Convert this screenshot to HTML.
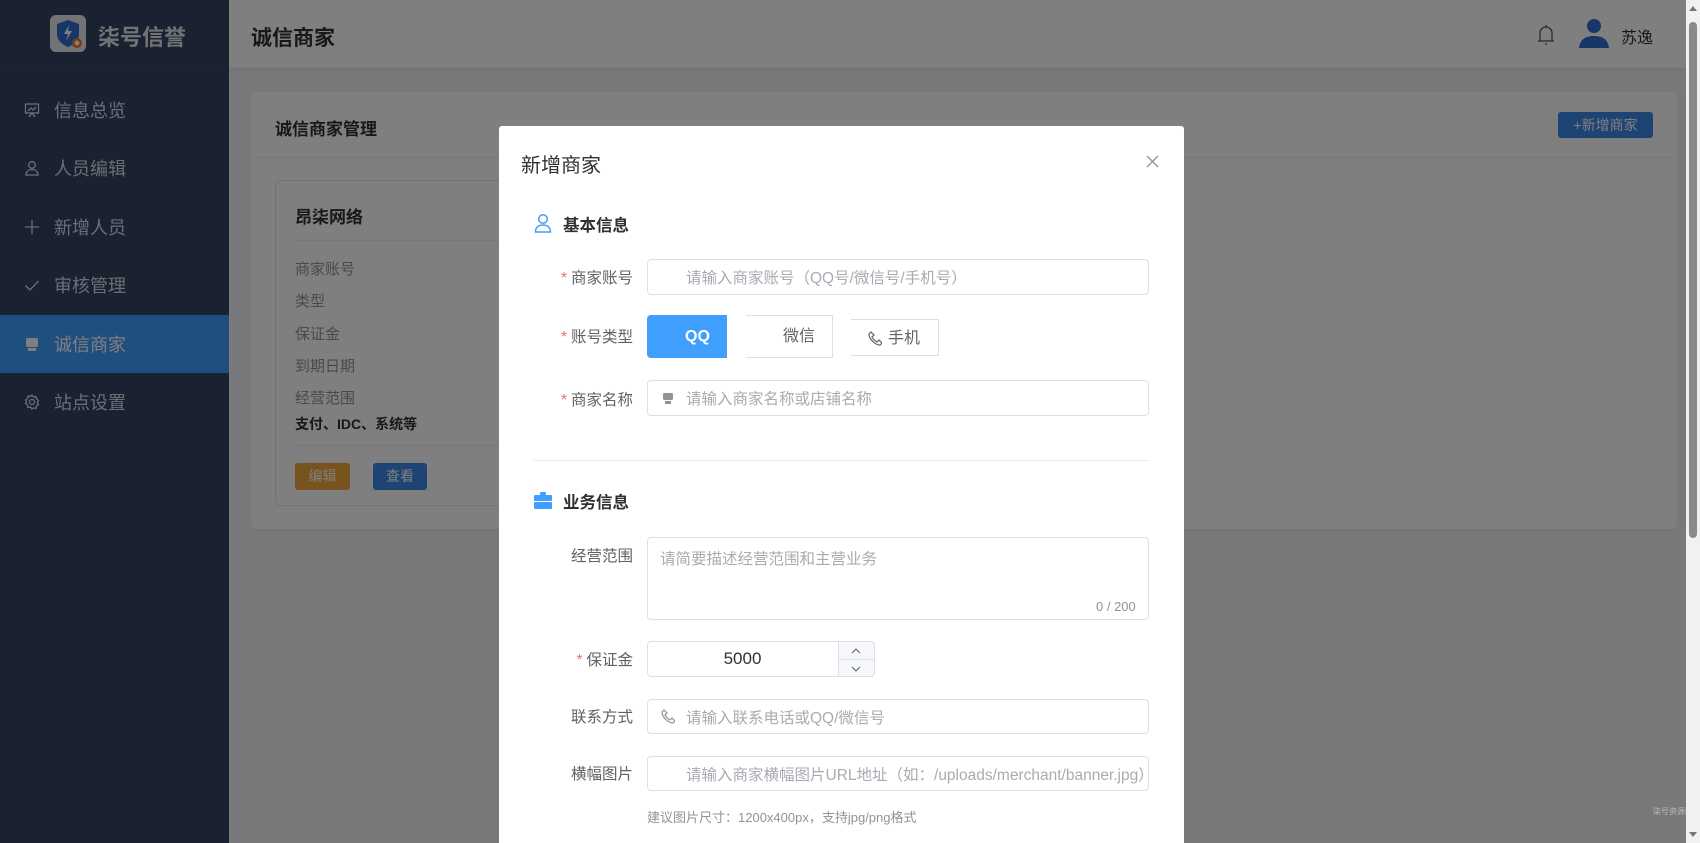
<!DOCTYPE html>
<html style="overflow:hidden;width:1700px;height:843px"><head><meta charset="utf-8"><style>
*{margin:0;padding:0;box-sizing:border-box}
body{width:1700px;height:843px;overflow:hidden;position:relative;font-family:"Liberation Sans","Noto Sans CJK SC",sans-serif;background:#f0f2f5;color:#303133}
.abs{position:absolute}
.side{left:0;top:0;width:229px;height:843px;background:#344260}
.menu{left:0;width:229px;height:58px;display:flex;align-items:center;padding-left:24px;color:#d8dde6;font-size:18px}
.menu svg{margin-right:14px}
.hdr{left:229px;top:0;width:1457px;height:68px;background:#fff;box-shadow:0 1px 4px rgba(0,0,0,.08)}
.card{background:#fff;border-radius:6px}
.lbl{font-size:15px;color:#909399}
.ov{left:0;top:0;width:1686px;height:843px;background:rgba(0,0,0,.5)}
.modal{left:499px;top:126px;width:685px;height:717px;background:#fff;border-radius:3px 3px 0 0}
.fl{position:absolute;font-size:15.5px;color:#606266;text-align:right;width:140px}
.fl b{color:#f56c6c;font-weight:normal;margin-right:4px}
.inp{position:absolute;border:1px solid #dcdfe6;border-radius:4px;background:#fff;font-size:15.5px;color:#a8abb2;display:flex;align-items:center}
.sec{position:absolute;font-size:16.5px;font-weight:bold;color:#303133}
</style></head><body>
<div class="abs side">
  <div class="abs" style="left:50px;top:15px;width:36px;height:37px;background:#e5e7eb;border-radius:6px"></div>
  <svg class="abs" style="left:52px;top:17px" width="32" height="33" viewBox="0 0 32 33"><path d="M16 3 L27 7 V17 C27 24 21 28 16 30 C11 28 5 24 5 17 V7 Z" fill="#2f6fd1"/><path d="M17 8 L12 17 H16 L14 24 L20 14 H16 Z" fill="#fff"/><circle cx="25" cy="26" r="5" fill="#f97316"/><circle cx="25" cy="26" r="2.5" fill="#fff"/></svg>
  <div class="abs" style="left:98px;top:20px;font-size:22px;font-weight:bold;color:#e5e7eb">柒号信誉</div>
  <div class="abs" style="left:0;top:68px;width:229px;height:1px;background:#3e4c6a"></div>
  <div class="abs menu" style="top:81px"><svg width="16" height="16" viewBox="0 0 16 16" fill="none" stroke="#d8dde6" stroke-width="1.3"><rect x="1.5" y="2" width="13" height="9"/><path d="M4 9l3-3 2 2 3-3M5 15l3-4 3 4"/></svg>信息总览</div>
  <div class="abs menu" style="top:139px"><svg width="16" height="16" viewBox="0 0 16 16" fill="none" stroke="#d8dde6" stroke-width="1.3"><circle cx="8" cy="5" r="3.3"/><path d="M2 15c0-4 3-5.5 6-5.5s6 1.5 6 5.5z"/></svg>人员编辑</div>
  <div class="abs menu" style="top:198px"><svg width="16" height="16" viewBox="0 0 16 16" stroke="#d8dde6" stroke-width="1.3"><path d="M8 1v14M1 8h14"/></svg>新增人员</div>
  <div class="abs menu" style="top:256px"><svg width="16" height="16" viewBox="0 0 16 16" fill="none" stroke="#d8dde6" stroke-width="1.3"><path d="M1.5 8.5l4.5 4.5 8.5-9"/></svg>审核管理</div>
  <div class="abs menu" style="top:315px;background:#409eff;color:#fff"><svg width="16" height="16" viewBox="0 0 16 16"><rect x="2" y="2" width="12" height="9" rx="2" fill="#fff"/><rect x="4" y="12" width="8" height="3" fill="#fff"/></svg>诚信商家</div>
  <div class="abs menu" style="top:373px"><svg width="16" height="16" viewBox="0 0 16 16" fill="none" stroke="#d8dde6" stroke-width="1.3"><circle cx="8" cy="8" r="2.5"/><path d="M8 1l1.5 2 2.5-.5.5 2.5 2 1.5-1.2 2 1.2 2-2 1.5-.5 2.5-2.5-.5L8 15l-1.5-2-2.5.5-.5-2.5-2-1.5 1.2-2L1.5 6l2-1.5.5-2.5 2.5.5z"/></svg>站点设置</div>
</div>
<div class="abs hdr">
  <div class="abs" style="left:22px;top:22px;font-size:21px;font-weight:bold;color:#303133">诚信商家</div>
  <svg class="abs" style="left:1307px;top:23px" width="20" height="24" viewBox="0 0 20 24" fill="none" stroke="#555" stroke-width="1.3"><path d="M4 18V10a6 6 0 0112 0v8M2 18h16M10 2v2M9 21h2"/></svg>
  <svg class="abs" style="left:1349px;top:17px" width="32" height="32" viewBox="0 0 32 32" fill="#2f6fd1"><circle cx="16" cy="9" r="7"/><path d="M1 31c1-9 7-12 15-12s14 3 15 12z"/></svg>
  <div class="abs" style="left:1392px;top:24px;font-size:16px;color:#303133">苏逸</div>
</div>
<div class="abs card" style="left:251px;top:92px;width:1426px;height:437px;box-shadow:0 1px 6px rgba(0,0,0,.06)">
  <div class="abs" style="left:24px;top:23px;font-size:17px;font-weight:bold">诚信商家管理</div>
  <div class="abs" style="left:1307px;top:20px;width:95px;height:26px;background:#3c89e6;border-radius:3px;color:#fff;font-size:14px;text-align:center;line-height:26px">+新增商家</div>
  <div class="abs" style="left:0;top:65px;width:1426px;height:1px;background:#ebeef5"></div>
  <div class="abs" style="left:24px;top:88px;width:400px;height:326px;border:1px solid #e4e7ed;border-radius:6px">
    <div class="abs" style="left:19px;top:22px;font-size:17px;font-weight:bold">昂柒网络</div>
    <div class="abs" style="left:19px;top:59px;width:360px;height:1px;background:#ebeef5"></div>
    <div class="abs lbl" style="left:19px;top:77px">商家账号</div>
    <div class="abs lbl" style="left:19px;top:109px">类型</div>
    <div class="abs lbl" style="left:19px;top:142px">保证金</div>
    <div class="abs lbl" style="left:19px;top:174px">到期日期</div>
    <div class="abs lbl" style="left:19px;top:206px">经营范围</div>
    <div class="abs" style="left:19px;top:233px;font-size:14px;font-weight:bold;color:#303133">支付、IDC、系统等</div>
    <div class="abs" style="left:19px;top:264px;width:360px;height:1px;background:#ebeef5"></div>
    <div class="abs" style="left:19px;top:282px;width:55px;height:27px;background:#f0a63a;border-radius:3px;color:#fff;font-size:14px;text-align:center;line-height:27px">编辑</div>
    <div class="abs" style="left:97px;top:282px;width:54px;height:27px;background:#3c89e6;border-radius:3px;color:#fff;font-size:14px;text-align:center;line-height:27px">查看</div>
  </div>
</div>
<div class="abs ov"></div>
<div class="abs" style="left:1653px;top:806px;font-size:8px;color:#bbb">柒号资源网</div>
<div class="abs modal">
  <div class="abs" style="left:22px;top:23px;font-size:20px;color:#303133">新增商家</div>
  <svg class="abs" style="left:647px;top:29px" width="13" height="13" viewBox="0 0 13 13" stroke="#909399" stroke-width="1.3"><path d="M1 1l11 11M12 1L1 12"/></svg>
  <svg class="abs" style="left:35px;top:87px" width="18" height="20" viewBox="0 0 18 20" fill="none" stroke="#409eff" stroke-width="1.5"><circle cx="9" cy="6" r="4.3"/><path d="M1.5 19c0-5 3.5-7 7.5-7s7.5 2 7.5 7z"/></svg>
  <div class="sec" style="left:64px;top:86px">基本信息</div>
  <div class="fl" style="left:-6px;top:140px"><b>*</b>商家账号</div>
  <div class="inp" style="left:148px;top:133px;width:502px;height:36px;padding-left:38px">请输入商家账号（QQ号/微信号/手机号）</div>
  <div class="fl" style="left:-6px;top:199px"><b>*</b>账号类型</div>
  <div class="abs" style="left:148px;top:189px;width:80px;height:43px;background:#409eff;border-radius:4px 0 0 4px;color:#fff;font-size:16px;font-weight:bold;line-height:43px;padding-left:38px">QQ</div>
  <div class="abs" style="left:247px;top:189px;width:87px;height:43px;border:1px solid #dcdfe6;border-left:none;color:#606266;font-size:16px;line-height:41px;padding-left:37px">微信</div>
  <div class="abs" style="left:352px;top:193px;width:88px;height:37px;border:1px solid #dcdfe6;border-left:none;color:#606266;font-size:16px;line-height:38px;padding-left:37px">手机</div>
  <svg class="abs" style="left:369px;top:205px" width="14" height="15" viewBox="0 0 14 15" fill="none" stroke="#606266" stroke-width="1.2"><path d="M3 1l3 3-2 2c1 2 3 4 5 5l2-2 3 3-2 2C7 14 1 8 1 3z"/></svg>
  <div class="fl" style="left:-6px;top:262px"><b>*</b>商家名称</div>
  <div class="inp" style="left:148px;top:254px;width:502px;height:36px;padding-left:38px">请输入商家名称或店铺名称</div>
  <svg class="abs" style="left:163px;top:266px" width="12" height="13" viewBox="0 0 12 13" fill="#909399"><rect x="1" y="1" width="10" height="7" rx="1.5"/><rect x="3" y="9" width="6" height="3"/></svg>
  <div class="abs" style="left:33px;top:334px;width:617px;height:1px;background:#ebeef5"></div>
  <svg class="abs" style="left:35px;top:366px" width="18" height="17" viewBox="0 0 18 17" fill="#409eff"><rect x="6" y="0" width="6" height="3" rx="1"/><rect x="0" y="3" width="18" height="6" rx="1"/><rect x="0" y="10" width="18" height="7" rx="1"/></svg>
  <div class="sec" style="left:64px;top:363px">业务信息</div>
  <div class="fl" style="left:-6px;top:418px">经营范围</div>
  <div class="inp" style="left:148px;top:411px;width:502px;height:83px;align-items:flex-start;padding:9px 12px">请简要描述经营范围和主营业务</div>
  <div class="abs" style="left:597px;top:473px;font-size:13px;color:#909399">0 / 200</div>
  <div class="fl" style="left:-6px;top:522px"><b>*</b>保证金</div>
  <div class="inp" style="left:148px;top:515px;width:228px;height:36px;justify-content:center;padding-right:37px;color:#303133;font-size:17px">5000</div>
  <div class="abs" style="left:339px;top:516px;width:36px;height:34px;background:#f5f7fa;border-left:1px solid #dcdfe6;border-radius:0 4px 4px 0"></div>
  <div class="abs" style="left:339px;top:533px;width:36px;height:1px;background:#dcdfe6"></div>
  <svg class="abs" style="left:352px;top:519px" width="10" height="30" viewBox="0 0 10 30" fill="none" stroke="#606266" stroke-width="1"><path d="M1 8l4-4 4 4M1 22l4 4 4-4"/></svg>
  <div class="fl" style="left:-6px;top:579px">联系方式</div>
  <div class="inp" style="left:148px;top:573px;width:502px;height:35px;padding-left:38px">请输入联系电话或QQ/微信号</div>
  <svg class="abs" style="left:162px;top:583px" width="14" height="15" viewBox="0 0 14 15" fill="none" stroke="#909399" stroke-width="1.2"><path d="M3 1l3 3-2 2c1 2 3 4 5 5l2-2 3 3-2 2C7 14 1 8 1 3z"/></svg>
  <div class="fl" style="left:-6px;top:636px">横幅图片</div>
  <div class="inp" style="left:148px;top:630px;width:502px;height:35px;padding-left:38px;overflow:hidden;white-space:nowrap">请输入商家横幅图片URL地址（如：/uploads/merchant/banner.jpg）</div>
  <div class="abs" style="left:148px;top:681px;font-size:13px;color:#909399">建议图片尺寸：1200x400px，支持jpg/png格式</div>
</div>
<div class="abs" style="left:1686px;top:0;width:14px;height:843px;background:#f1f1f1"></div>
<div class="abs" style="left:1689px;top:22px;width:8px;height:516px;background:#8a8a8a;border-radius:4px"></div>
<div class="abs" style="left:1689px;top:6px;width:0;height:0;border-left:4px solid transparent;border-right:4px solid transparent;border-bottom:5px solid #777"></div>
<div class="abs" style="left:1689px;top:832px;width:0;height:0;border-left:4px solid transparent;border-right:4px solid transparent;border-top:5px solid #777"></div>
</body></html>
